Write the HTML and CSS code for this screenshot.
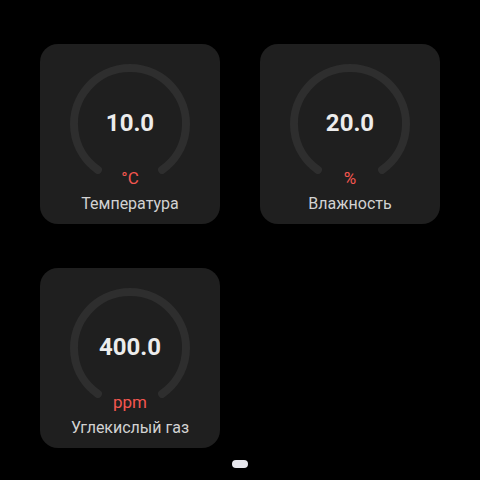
FILE: index.html
```html
<!DOCTYPE html>
<html>
<head>
<meta charset="utf-8">
<link rel="stylesheet" href="styles.css">
</head>
<body>
<div class="screen">
  <div class="grid">
    <div class="card">
      <svg class="gauge" viewBox="0 0 180 180" width="180" height="180"><path d="M57.9 125.9 A56 56 0 1 1 122.1 125.9" /></svg>
      <div class="content">
        <div class="value">10.0</div>
        <div class="unit">°C</div>
        <div class="label">Температура</div>
      </div>
    </div>
    <div class="card">
      <svg class="gauge" viewBox="0 0 180 180" width="180" height="180"><path d="M57.9 125.9 A56 56 0 1 1 122.1 125.9" /></svg>
      <div class="content">
        <div class="value">20.0</div>
        <div class="unit">%</div>
        <div class="label">Влажность</div>
      </div>
    </div>
    <div class="card">
      <svg class="gauge" viewBox="0 0 180 180" width="180" height="180"><path d="M57.9 125.9 A56 56 0 1 1 122.1 125.9" /></svg>
      <div class="content">
        <div class="value">400.0</div>
        <div class="unit">ppm</div>
        <div class="label">Углекислый газ</div>
      </div>
    </div>
  </div>
  <div class="pager"><span class="dot"></span></div>
</div>
</body>
</html>
```
FILE: styles.css
```css
html, body {
  margin: 0;
  padding: 0;
  background: #000;
}
.screen {
  width: 480px;
  height: 480px;
  box-sizing: border-box;
  padding: 44px 40px 0;
  font-family: Roboto, "Noto Sans", sans-serif;
  display: flex;
  flex-direction: column;
}
.grid {
  display: grid;
  grid-template-columns: 180px 180px;
  column-gap: 40px;
  row-gap: 44px;
}
.card {
  width: 180px;
  height: 180px;
  background: #1f1f1f;
  border-radius: 18px;
  display: grid;
}
.gauge, .content {
  grid-area: 1 / 1;
}
.gauge path {
  fill: none;
  stroke: #2e2e2e;
  stroke-width: 8;
  stroke-linecap: round;
}
.content {
  display: flex;
  flex-direction: column;
  align-items: center;
}
.value {
  margin-top: 64.5px;
  font-size: 24px;
  line-height: 28px;
  font-weight: 700;
  color: #ececec;
}
.unit {
  margin-top: 31px;
  font-size: 17px;
  line-height: 20px;
  color: #f4564f;
}
.label {
  margin-top: 6px;
  font-size: 16px;
  line-height: 20px;
  color: #d2d2d2;
}
.pager {
  display: flex;
  justify-content: center;
  margin-top: 12px;
}
.dot {
  width: 16px;
  height: 8px;
  border-radius: 4px;
  background: #e8e8ee;
}
```
